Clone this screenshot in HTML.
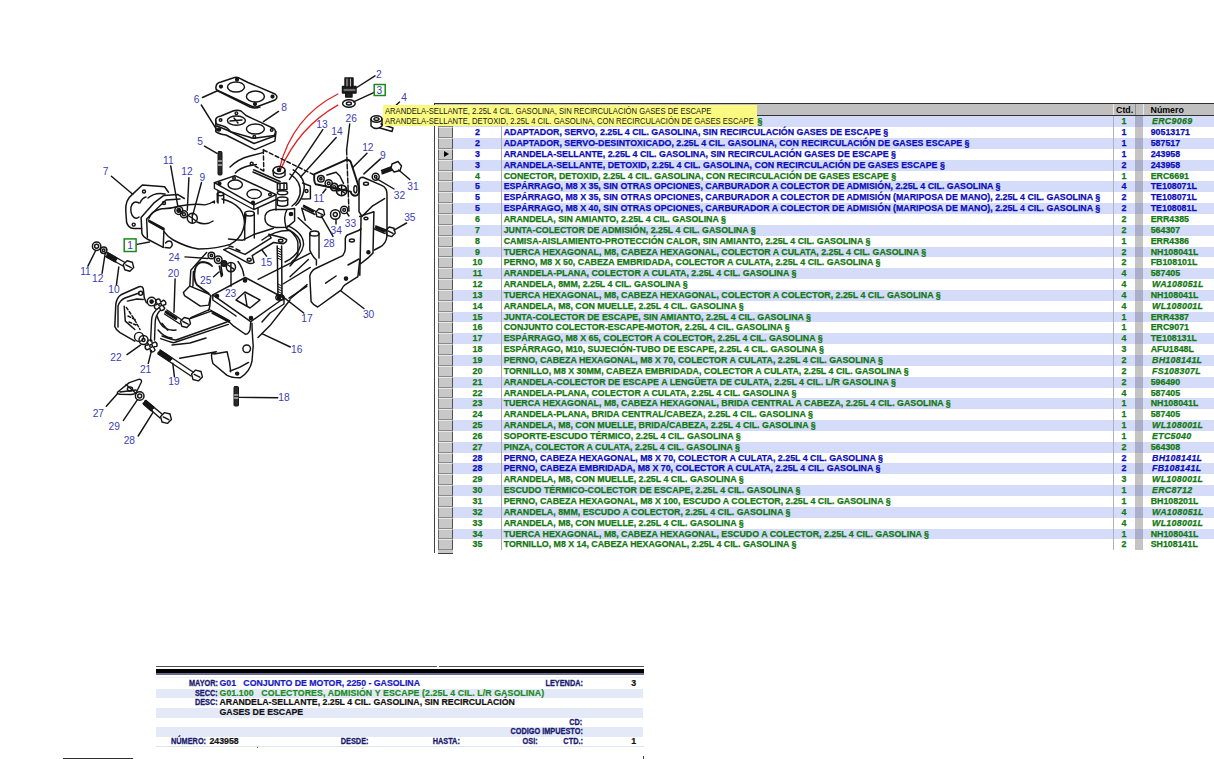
<!DOCTYPE html>
<html><head><meta charset="utf-8"><style>
*{margin:0;padding:0}
html,body{width:1214px;height:759px;overflow:hidden;background:#fff;position:relative;font-family:"Liberation Sans",sans-serif}
.row{position:absolute;left:453px;width:761px;height:10.845px}
.gc{position:absolute;left:1135px;width:8px;height:10.845px}
.sel{position:absolute;left:438px;width:15px;background:#c8c8c8;box-sizing:border-box;border-left:1.3px solid #6a6a6a;border-right:1.3px solid #505050;border-top:1px solid #e8e8e8;border-bottom:1px solid #8a8a8a}
.t{position:absolute;white-space:nowrap;font-weight:bold;font-size:8.83px;-webkit-text-stroke:0.25px currentColor;line-height:10.845px;height:10.845px}
.b{color:#0c0cb8}
.g{color:#127812}
.num{left:453px;width:49px;text-align:center}
.desc{left:503.7px}
.ctd{left:1113px;width:22px;text-align:center}
.part{left:1150.7px}
.it{font-style:italic;letter-spacing:0.3px;left:1152px}
.hd{position:absolute;top:104.8px;line-height:11px;font-size:8.83px;font-weight:bold;color:#000}
.tip{position:absolute;left:383px;top:104.5px;width:374px;height:21.3px;background:#fafa82}
.tipt{position:absolute;left:384.7px;font-size:8.8px;color:#202010;white-space:nowrap;line-height:10px;transform:scaleX(0.869);transform-origin:0 0}
.pl{position:absolute;font-size:8.6px;font-weight:bold;color:#1a1a70;line-height:9.6px;white-space:nowrap;transform:scaleX(0.854);transform-origin:100% 0;-webkit-text-stroke:0.3px currentColor}
.pv{position:absolute;font-size:8.75px;font-weight:bold;line-height:9.6px;white-space:nowrap;-webkit-text-stroke:0.2px currentColor}
</style></head><body>
<svg style="position:absolute;left:0;top:0" width="1214" height="759" viewBox="0 0 1214 759">
<g fill="none" stroke="#151515" stroke-width="1.45" stroke-linecap="round" stroke-linejoin="round">
<!-- leaders -->
<path d="M375,75.8L355.2,88.5 M374.2,92.4L353.6,101.9 M399.5,101.9L396.3,105 M202.5,97.5L218,90.5 M201.3,105L217.1,130.4 M278.5,111.4L263.4,121.7 M204.5,146.2L217,153.3 M322.8,129.6L289.5,179.4 M336.2,137.5L300.6,177 M349.7,124L346.6,150 M367,153.3L352.8,167.6 M380.5,158.9L363.9,173.9 M111.4,176.2L132.7,194.3 M170.7,165.9L177.8,206.2 M188.9,177.7L187.3,210.2 M201.5,182.5L192.8,214.9 M322.8,193L325.9,189 M409.8,179.5L398.7,170 M394,189L376.5,178.7 M406.6,223L394,230.1 M333,236.4L321.2,215.9 M136.9,244.4L149.5,242 M87.9,266.1L95.8,250.3 M102.1,273.2L105.3,252.7 M116.4,285.1L118.8,266.9 M185,256.9L208,258.5 M175.1,279L174,312.3 M213.6,276.7L219,272 M231,286.2L231,271.1 M266.5,256.1L261.8,249.8 M303.7,313L282.4,296.4 M363.9,308.5L341,291 M290.3,347L261.9,333.7 M277.7,397.8L239,397.4 M127,354.6L140.4,345.1 M148.3,363.3L151.5,350.6 M174.4,376.7L172.8,363.3 M106.3,406.3L117.4,393.7 M123.4,420.4L137.5,399.7 M138.2,436L153,412.3"/>
<path d="M346.6,150 L349,212" stroke-dasharray="5,2"/>
<!-- gasket 6 -->
<path d="M216,87 Q216,83 221,82 L233,78 Q237,76 241,79 L248,82.5 L275,94 Q279,97 275,100 L259,106 Q255,108 251,106 L221,92 Q215,90 216,87Z" stroke-width="1.5"/>
<path d="M218,91 L250,107 Q255,109 260,107" />
<ellipse cx="236" cy="87" rx="8.5" ry="5"/><ellipse cx="255.4" cy="96.4" rx="9" ry="5.5"/>
<circle cx="221" cy="86.5" r="1.4" fill="#151515"/><circle cx="237" cy="79.5" r="1.4" fill="#151515"/><circle cx="272.5" cy="96.5" r="1.4" fill="#151515"/><circle cx="255" cy="104" r="1.4" fill="#151515"/>
<!-- spacer 8 -->
<path d="M215.8,119 Q217,116.5 221,116 L233,111 Q237,109.5 241,111 L246,115.5 L273.8,128.5 Q277,131 274,135.5 L256,138 Q253,139 249,137 L230.6,131.6 Q227,127 223,126 L217,124.3 Q215,122 215.8,119Z"/>
<path d="M215.8,120 L215.8,131.6 Q219,134 226,135 L254.9,149.6 L274.9,141.1 L276,131.6 M217,126 L228,130.5 L254,143.5 L274.5,136" stroke-width="1.5"/>
<ellipse cx="236.4" cy="120.6" rx="9" ry="4.7"/><ellipse cx="255.4" cy="129" rx="9" ry="5"/>
<path d="M230,121 L242,120 M234,118 L238,123"/>
<circle cx="220.6" cy="120" r="1.3"/><circle cx="236.4" cy="113.2" r="1.3"/><circle cx="271.7" cy="130" r="1.3"/><circle cx="254.3" cy="136.9" r="1.3"/>
<circle cx="219" cy="129.5" r="1.5" fill="#151515"/>
<!-- stud 5 -->
<rect x="218" y="151.5" width="4" height="23.5" rx="1" fill="#2a2a2a" stroke-width="1"/>
<path d="M218.5,161 L221.5,161 M218.5,165 L221.5,165" stroke="#fff" stroke-width="1"/>
<!-- part 2 plug -->
<path d="M345,78 L353,78 L353,87 L345,87Z M342.5,86.5 L356,86.5 L356,93 L342.5,93Z M345.7,93 L345.7,97 L352,97 L352,93" fill="#222"/>
<path d="M347,79 L347,86 M350.5,79 L350.5,86 M344,90 L355,90" stroke="#fff" stroke-width="0.7"/>
<ellipse cx="348.9" cy="103.5" rx="6.3" ry="3.8" stroke-width="1.5"/><ellipse cx="348.9" cy="103.5" rx="2.5" ry="1.5"/>
<!-- connector 4 -->
<ellipse cx="376.5" cy="119" rx="5.5" ry="3.2"/><ellipse cx="376.5" cy="119" rx="2.5" ry="1.4"/>
<path d="M371,119 L371,126 Q376,131 382,126 L382,119 M381,124 L393,128 L392,131.5 L380,128"/>
<!-- red curves -->
<path d="M337.8,94 Q292,117 279.3,169.1 M337.8,105.1 Q299,127 280.8,169.1" stroke="#e02020" stroke-width="1.3"/>
<!-- plenum housing -->
<path d="M230,167.1 Q238,159 250,156 L263,152.6"/>
<path d="M235.3,173 Q240,168 248,166 L256.4,164.5"/>
<path d="M253.7,169.8 L280,181.6 M253,172 L279,183.5" stroke-width="1.6"/>
<circle cx="251.7" cy="163.8" r="1.5"/>
<path d="M263.3,149.6 L263.8,171 M263.5,150 L314.3,175 M263.8,171 L255,166" stroke-dasharray="4,2.5"/>
<path d="M293.2,169.8 Q306,178 304,190 Q302,200 295.9,205.3 M290,174 Q302,182 300,194 Q298,202 292,206"/>
<path d="M302.5,183 L310.4,186 L310.4,198.7 L302,199" /><circle cx="306.5" cy="191" r="1.5"/>
<!-- boss on housing -->
<ellipse cx="279.1" cy="170.3" rx="6" ry="3.8"/><path d="M273,170.5 L273.5,175.5 Q279,180 285,175.5 L285,170.5"/><circle cx="279" cy="170" r="1.6" fill="#151515"/>
<!-- nut stack 13/14 -->
<path d="M277.4,183.5 L286.7,183 L287,189.5 L277.4,190Z" stroke-width="1.5"/>
<path d="M280,183.5 L280,190 M284,183 L284,189.5"/>
<ellipse cx="282.5" cy="192.8" rx="5.2" ry="2"/>
<ellipse cx="282.5" cy="199" rx="5.2" ry="2"/><path d="M277.3,199 L277.3,205 Q282.5,207.5 287.7,205 L287.7,199"/>
<!-- thermostat cap -->
<path d="M265,219 Q264,211 274,209.5 L287,209.5 L294.6,208.5 L294.6,221 L287,227.3 L276,227.5 Q265,226 265,219Z" stroke-width="1.5"/>
<path d="M287,209.5 Q283,217 286,227.3"/><circle cx="291" cy="214" r="1.6" fill="#151515"/>
<!-- carb base block -->
<path d="M214.4,182.7 L234.9,175.6 L276,194.6 L253.8,204.8 Z" stroke-width="1.5"/>
<path d="M214.4,182.7 L214.4,188.5 L253.8,209.5 L276,199.5 L276,194.6 M253.8,204.8 L253.8,209.5" stroke-width="1.4"/>
<path d="M218,190.5 L218,203 M276,199.5 L276,210 M258,208 L258,214"/>
<ellipse cx="235.2" cy="184.6" rx="7.2" ry="4.6"/><ellipse cx="254.2" cy="194" rx="7.2" ry="4.6"/>
<circle cx="219.5" cy="183.5" r="1.4" fill="#151515"/><circle cx="234" cy="178" r="1.3"/><circle cx="270" cy="194.5" r="1.3"/><circle cx="253" cy="202.5" r="1.4" fill="#151515"/>
<ellipse cx="220.5" cy="194" rx="3.2" ry="1.8"/><path d="M217.3,194 L217.3,202 M223.7,194 L223.7,203"/>
<!-- gasket 7 -->
<path d="M132.1,194.6 L142.4,185 L164.6,186.7 L168.5,192.2 M132.1,194.6 Q125,200 125.8,211.2 L126.6,222.3 Q128,228 133.7,228.6 L141.6,228.6" stroke-width="1.5"/>
<path d="M139,203 Q133,200 131,207 Q130,214 134,217.5 Q137,219 139,217"/><circle cx="144" cy="191.4" r="1.5"/><circle cx="133.7" cy="224.6" r="1.5"/>
<path d="M148,198 Q155,192 165,194 M140,203 Q142,198 146,197"/>
<!-- intake pipe flange -->
<path d="M141.1,217.4 L153.7,203.2 L163.8,195.4 L178,194.6 L184.3,198.5 M141.1,217.4 L141.9,233.2 Q143,237 148.2,239.5 L163.2,247.4" stroke-width="1.5"/>
<path d="M146.6,219 L156.9,208.7 L166,200 L180,199 M146.6,219 L147.4,237.2"/>
<path d="M148.2,219.8 L164,228.5 L163.2,247.4 M148.8,221.5 L164,230"/>
<circle cx="164" cy="203" r="1.5"/>
<path d="M165.6,243 Q168,240 171,241.5 Q174,245 170,248 L165,247.5"/>
<!-- intake pipe body -->
<path d="M149,218.2 Q151,211 161.6,208.7 Q170,209 179.6,206 Q195,203 204.9,204.9 Q210,204 214.4,201 L214.4,203"/>
<path d="M164,231.6 Q168,237 173.3,240 Q186,247 198.6,249.1 Q218,248.5 230.2,244.4 Q240,239 243,230 Q246,222 246,214" stroke-width="1.5"/>
<path d="M222,199 Q234,202 240,209 Q245,216 244.5,226"/>
<path d="M197,222 Q206,226 213,221"/>
<!-- nuts on pipe 11 12 9 -->
<circle cx="178.8" cy="210.4" r="4" stroke-width="1.5"/><circle cx="178.8" cy="210.4" r="1.8" fill="#151515"/>
<circle cx="184" cy="214.3" r="3.5" stroke-width="1.5"/><circle cx="184" cy="214.3" r="1.5"/>
<circle cx="192.3" cy="218.3" r="5" stroke-width="1.5"/><path d="M189,216 L195.5,220.5 M192.3,213.5 L192.3,223"/>
<!-- bracket 26 -->
<path d="M314.4,174.1 L346.2,159.8 Q349.5,159.5 350.8,162.1 L359.1,187.9 Q360,195.3 355,195.8 Q351,195 350.8,191.6 L315.8,184.2 Q313.5,182 314.4,174.1Z" stroke-width="1.9"/>
<path d="M326.9,175 L336.1,172.3 L339.8,176 L343.5,183.3"/>
<ellipse cx="355.4" cy="189.3" rx="1.6" ry="3.6"/>
<circle cx="320.9" cy="178.7" r="3.3" stroke-width="1.5"/><circle cx="320.9" cy="178.7" r="1.2"/>
<circle cx="328.7" cy="183.3" r="3.6" stroke-width="1.5"/><circle cx="328.7" cy="183.3" r="1.4"/>
<circle cx="334.2" cy="187" r="3.6" stroke-width="1.8"/><circle cx="334.2" cy="187" r="1.4"/>
<circle cx="341.6" cy="190.4" r="5.3" stroke-width="1.6"/><path d="M338.5,188 L344.5,193 M341.6,185.5 L341.6,195.3 M337,191 L346,189"/>
<!-- bolt 31 -->
<path d="M382.2,173.7 L391.7,170.2 M381.5,170.5 L391,167" stroke-width="1.5"/>
<path d="M382.5,172 L390,169" stroke-width="2.5"/>
<path d="M392,164 L398,161.5 L401.5,166 L400,170.5 L394,172 L391,168Z" stroke-width="1.4"/>
<!-- washer 32 -->
<circle cx="375.7" cy="176.7" r="3.5" stroke-width="1.5"/><circle cx="375.7" cy="176.7" r="1.3"/>
<!-- heat shield 30 upper -->
<path d="M359,181 Q359,177.5 363,177.3 L382.2,185.6 Q387,188 387,194 L387,236 Q386,244 380,247 L374.3,250 M359,181 L359,211.7 L362,216.4 M372.7,205.8 L384.6,198.6 M362,216.4 L372.7,205.8" stroke-width="1.5"/>
<ellipse cx="366" cy="183.8" rx="2.5" ry="1.5"/>
<!-- bracket vertical -->
<path d="M359.7,216.4 L373.9,211.7 L373,253 L367.7,258.2 L361,263.5 M361,216.4 L361,220 L359.8,275.3" stroke-width="1.5"/>
<ellipse cx="366" cy="218.5" rx="2" ry="1.3"/><circle cx="368.4" cy="252.3" r="1.5" fill="#151515"/>
<!-- heat shield lower -->
<path d="M315,268.7 L342.7,255.6 Q345.3,252 345.3,249 L345.3,238.4 Q346,235 348.6,234.5 L358.5,230.5 L361,229 M311.1,272.7 Q309.8,275 309.8,276 L311.1,301.7 Q313,305 317.7,307 L341.4,289.8 Q343,286 345.3,284.6 L357.9,276.7 L359.8,259.5 M311.1,272.7 Q313,269.5 315,268.7" stroke-width="1.5"/>
<path d="M325.6,283.2 L336.1,276" stroke-width="1.5"/><circle cx="346" cy="278.6" r="1.6" fill="#151515"/>
<ellipse cx="351.9" cy="240.4" rx="2.5" ry="1.5"/>
<path d="M348,265 L359,259"/>
<!-- bolt 28 r, 35 -->
<path d="M303.8,205.3 L316,211.5 M302.5,208.5 L315,214.5" stroke-width="1.4"/>
<path d="M304,206.5 L313,211.5" stroke-width="2.5"/>
<path d="M324.6,214.4 L321.4,217.6 L316.9,216.5 L315.8,212.0 L319.0,208.8 L323.5,209.9Z M317.9,212.3 L322.5,214.6" stroke-width="1.4"/>
<path d="M375.7,225.9 L386,230 M374.5,229 L385,233.5" stroke-width="1.4"/>
<path d="M376,227.5 L384,231" stroke-width="2.5"/>
<path d="M395.3,233.1 L391.8,236.6 L387.0,235.3 L385.7,230.5 L389.2,227.0 L394.0,228.3Z M388.0,230.8 L393.0,233.3" stroke-width="1.4"/>
<!-- nuts 34 33 -->
<circle cx="335.3" cy="214.5" r="4.8" stroke-width="1.5"/><circle cx="335.3" cy="214.5" r="2"/>
<circle cx="344.2" cy="209.9" r="3.6" stroke-width="1.5"/><circle cx="344.2" cy="209.9" r="1.4"/>
<path d="M336,219.5 L336,224 M347,213 L349,216"/>
<!-- pipe stub -->
<ellipse cx="314.4" cy="233.5" rx="4.6" ry="2.6"/>
<path d="M309.8,233.5 L309.8,250 Q312,256 316.4,260 L316.4,265 M319,233.5 L319,258"/>
<!-- manifold 16 & housing -->
<path d="M290,230.5 Q298,238 297.9,243.7 L297.9,254.3 Q294,262 290,266"/>
<path d="M290,276.7 L308.4,259.5 M290,299 L307.1,284.6" />
<path d="M262,240 Q275,230 290,230.5"/>
<!-- flange plate -->
<path d="M212.8,294.9 L245.2,277.5 L284,298 L250.7,321.7 Z" stroke-width="1.5"/>
<path d="M212.8,294.9 L212.8,300 L236,316 M284,298 L284,304 L270,313 L262,322"/>
<path d="M236,300 L245,292 L260,300 L250,308 Z"/><path d="M245,294 L247,306"/>
<circle cx="217" cy="296" r="1.6" fill="#151515"/><circle cx="245" cy="280.5" r="1.6" fill="#151515"/><circle cx="279" cy="298" r="1.6" fill="#151515"/><circle cx="251" cy="318" r="1.6" fill="#151515"/>
<path d="M250.7,321.7 L250,330 Q248,335 245,334 L233,325.6 Q226,318 211.7,311.4"/>
<path d="M258,337.4 L270,325.6 L290,300 M252,323.2 Q252,330 253.2,345.8 L252,361.2 Q250,372 240.2,377.8 Q232,378 227.1,375.4 L212.9,363.5 Q211,357 211.7,354 L216.4,351.7 L179.7,358.2"/>
<path d="M214,354 L227.1,351.7 Q230,362 230.7,371.8 M248.5,362.4 Q240,368 230,371"/>
<circle cx="246.7" cy="348.7" r="3.8"/><circle cx="237.2" cy="373.6" r="1.5" fill="#151515"/>
<!-- manifold body lines -->
<path d="M190.3,318.5 L210.5,311.4"/>
<path d="M160.7,338.6 Q170,342 173.7,342.8 L228.3,324.4 M162,336 Q172,340 176,340 L227,322"/>
<path d="M161.9,323.2 Q166,328 167.8,330.3"/>
<!-- pad 24/25 -->
<path d="M206.6,252.4 L190.8,270.3 L189.8,286.1 L183.4,292.4 L184.5,295.6 L200.3,306.1 L208.7,305.1 L210.8,295.6 M183.4,292.4 L189.8,286.1 L207.7,293.5 L210.8,295.6 M193.4,271.4 L192.9,286.1"/>
<path d="M195,269.2 Q197,262 203,262 Q209,262.5 212,266 M195,269.2 Q193,279 197.1,285.1 L208.7,293.5" stroke-width="1.9"/>
<path d="M210.8,295.6 L209.8,306.1 L208.7,310.4 M190.8,317.7 L209.8,309.3 M210.8,310.4 L229.8,320.9 M212,313 L229,322"/>
<circle cx="211.4" cy="255.5" r="3.3" stroke-width="1.4"/><circle cx="211.4" cy="255.5" r="1.2"/>
<circle cx="218.2" cy="259.8" r="3.8" stroke-width="1.5"/><circle cx="218.2" cy="259.8" r="1.5"/>
<circle cx="224" cy="263.4" r="2.8" fill="#222"/>
<circle cx="230.9" cy="267.1" r="4.6" stroke-width="1.5"/><path d="M228,265 L233.8,269.2 M230.9,262.8 L230.9,271.4"/>
<path d="M219.3,266.1 L221.4,276.6 L222.5,275 L221,266"/>
<!-- stud 17 -->
<path d="M277.2,246 L278,297 M281.6,246 L282,297" stroke-width="1.5"/>
<path d="M277.5,248 L281.6,250 M277.5,250.5 L281.6,252.5 M277.5,253 L281.6,255 M277.5,255.5 L281.6,257.5 M277.5,258 L281.6,260 M277.8,284 L282,286 M277.8,286.5 L282,288.5 M277.8,289 L282,291 M277.8,291.5 L282,293.5 M277.8,294 L282,296" stroke-width="1"/>
<ellipse cx="280" cy="297.5" rx="4.2" ry="2.8" stroke-width="1.4"/>
<!-- gasket 15 -->
<path d="M223.7,249.7 L247.4,262.7 Q251,264.5 254,262.5 L252.2,255.6 L273.5,242.5 L283,243.7 Q287,242 286.6,239.5 L283,237.8 L268.8,234.2 L271.2,237.8 L245,254.4 L228.5,247.9 Z" stroke-width="1.5"/>
<ellipse cx="249.2" cy="259.7" rx="2" ry="1.5"/><ellipse cx="280.7" cy="240.8" rx="2.2" ry="1.5"/>
<path d="M229,246 L233,247 M236,249 L240,251"/>
<!-- behind lines -->
<path d="M228.5,239 Q236,240 242.7,240.2 L254.6,234.2 L273.5,228.3"/>
<path d="M286.3,228.5 Q301,236 300.5,245 Q299,253 289.8,259.3 L285,262 M288,225.8 Q304,233 303.5,245 Q302,254 292,261.5"/>
<path d="M298.1,217.8 L311.2,229.7 M301.7,208.3 L305.2,220.2"/>
<ellipse cx="249.5" cy="213.5" rx="4.8" ry="2.4"/><path d="M244.7,213.5 L244.7,240 M254.3,213.5 L254.3,238"/>
<path d="M258.1,279.3 L310.3,253.2 M283,284 L310.3,267.4 M289,298 L306.8,286.4"/>
<path d="M238,261.5 Q243,268 243.9,275.8"/>
<!-- bolt 20 -->
<path d="M166.9,310 L182,320 M164.5,314 L180,324" stroke-width="1.4"/>
<path d="M166,312 L176,318.5" stroke-width="3"/>
<path d="M190.5,323.8 L186.8,327.5 L181.8,326.2 L180.5,321.2 L184.2,317.5 L189.2,318.8Z M182.9,321.5 L188.1,324.1" stroke-width="1.4"/>
<!-- exhaust left flange -->
<path d="M114.8,326.4 L115.8,304.2 Q117,297 121,294.8 L131.6,290 L139,286.8 Q142,286 143.2,288.4 L144.3,297.9 L146.4,302.7 M114.8,326.4 Q116,330 120,332.7 L134.8,341.1" stroke-width="1.5"/>
<path d="M118,327 L118,306 Q120,300 125,298 L139,293 M124.2,306.3 L125.3,321.1 L134.8,329.5 M127.4,301.1 L136.9,299 L143.2,299.5"/>
<path d="M126.3,307.4 Q134,318 140,329.5 M128,316 L136,320 M129,322 L136,325" stroke-dasharray="3,2"/>
<circle cx="140.6" cy="293.2" r="2"/>
<circle cx="139" cy="336.9" r="4.5" stroke-width="1.4"/><circle cx="143.5" cy="340" r="4.5" stroke-width="1.4"/><circle cx="143.5" cy="340" r="1.5"/>
<!-- clamp 21 -->
<path d="M160.8,302.3 Q162.1,301.2 163.4,300.1 Q166.3,301.2 165.8,304.3 Q164.2,304.9 162.6,305.5 Q163.7,306.8 164.8,308.1 Q163.7,311.0 160.6,310.5 Q160.0,308.9 159.4,307.3 Q158.1,308.4 156.8,309.5 Q153.9,308.4 154.4,305.3 Q156.0,304.7 157.6,304.1 Q156.5,302.8 155.4,301.5 Q156.5,298.6 159.6,299.1 Q160.2,300.7 160.8,302.3 Z" stroke-width="1.4"/>
<path d="M152.2,343.5 Q153.7,342.7 155.2,341.9 Q157.9,343.4 156.8,346.4 Q155.1,346.7 153.5,347.0 Q154.3,348.5 155.1,350.0 Q153.6,352.7 150.6,351.6 Q150.3,349.9 150.0,348.3 Q148.5,349.1 147.0,349.9 Q144.3,348.4 145.4,345.4 Q147.1,345.1 148.7,344.8 Q147.9,343.3 147.1,341.8 Q148.6,339.1 151.6,340.2 Q151.9,341.9 152.2,343.5 Z" stroke-width="1.4"/>
<circle cx="160.1" cy="304.8" r="1.4"/><circle cx="151.1" cy="345.9" r="1.4"/>
<path d="M155.8,310.6 Q152,314 151.6,320 L150.6,341 M159.5,311 Q155.5,316 155.2,322 L154.5,340" stroke-width="1.4"/>
<circle cx="151.6" cy="301.6" r="4.3" stroke-width="1.4"/><circle cx="151.6" cy="301.6" r="1.6" fill="#151515"/>
<path d="M157,316 Q160,325 165,328 Q170,331 176,330 M158,330 Q165,338 172,338"/>
<!-- bolt 19 -->
<path d="M160.2,350 L193,372 M158,354 L191,376" stroke-width="1.4"/>
<path d="M160.5,351.5 L171,358.5 M159,353 L169.5,360" stroke-width="3.2"/>
<path d="M202.4,376.9 L198.4,380.9 L193.0,379.5 L191.6,374.1 L195.6,370.1 L201.0,371.5Z M194.2,374.4 L199.8,377.2" stroke-width="1.4"/>
<path d="M172,345 L190,343 L206,338"/>
<!-- bolt 10 + washers -->
<path d="M107.7,252.7 L125,262.5 M106,256.5 L123,266" stroke-width="1.4"/>
<path d="M108,254 L116,258.5 M107,256.5 L115,261" stroke-width="3"/>
<path d="M133.7,267.4 L129.9,271.2 L124.7,269.8 L123.3,264.6 L127.1,260.8 L132.3,262.2Z M125.8,264.9 L131.2,267.6" stroke-width="1.4"/>
<circle cx="96.6" cy="246.3" r="4.2" stroke-width="1.5"/><circle cx="96.6" cy="246.3" r="2"/>
<circle cx="103.7" cy="250.3" r="3.2" stroke-width="1.5"/><circle cx="103.7" cy="250.3" r="1.3"/>
<!-- stud 18 -->
<rect x="234" y="386.5" width="4.5" height="19.5" rx="1" fill="#2a2a2a" stroke-width="1"/>
<path d="M234.5,395 L238,395 M234.5,398 L238,398" stroke="#fff" stroke-width="1"/>
<!-- clamp 27 -->
<path d="M117.4,392.2 L129.3,382.6 L139.5,379.2 Q142,379.5 141.4,382 L136.5,392 Q135,394.5 131,394.5 L120.4,394.2 Q117,394 117.4,392.2Z M120,392 L136,390 M126,384.5 L135,392.5" stroke-width="1.4"/>
<ellipse cx="130" cy="389" rx="2.6" ry="2.1"/>
<circle cx="139.7" cy="396" r="4.3" stroke-width="1.5"/><circle cx="139.7" cy="396" r="2"/>
<!-- bolt 28 lower -->
<path d="M145.6,400.4 L162,414 M143.5,403.5 L160,418" stroke-width="1.4"/>
<path d="M145.5,401.5 L153,407.5 M144,403.5 L151.5,410" stroke-width="3"/>
<path d="M171.4,419.4 L167.4,423.4 L162.0,422.0 L160.6,416.6 L164.6,412.6 L170.0,414.0Z M163.2,416.9 L168.8,419.7" stroke-width="1.4"/>
</g>
<g fill="#3c3cb4" font-family="Liberation Sans, sans-serif" font-size="10.2" text-anchor="middle" dominant-baseline="central">
<text x="378.9" y="74.2">2</text><text x="379.4" y="90">3</text><text x="404.2" y="97.2">4</text>
<text x="196.5" y="99.5">6</text><text x="284" y="107.5">8</text><text x="200" y="141.5">5</text>
<text x="322" y="124">13</text><text x="337" y="131.2">14</text><text x="351.2" y="118.5">26</text>
<text x="105.7" y="171.4">7</text><text x="168.3" y="160.2">11</text><text x="186.9" y="171">12</text><text x="202.4" y="177.5">9</text>
<text x="367.8" y="147">12</text><text x="382.9" y="155">9</text><text x="318.8" y="198.5">11</text>
<text x="413" y="186.6">31</text><text x="399.5" y="195.3">32</text><text x="409.8" y="217.5">35</text>
<text x="350.4" y="223">33</text><text x="336.2" y="230.1">34</text><text x="329.1" y="243.6">28</text>
<text x="130.1" y="245.2">1</text><text x="85.5" y="271.6">11</text><text x="97.7" y="278.8">12</text><text x="114" y="289">10</text>
<text x="174.1" y="257.2">24</text><text x="173.4" y="273.8">20</text><text x="205.7" y="280.5">25</text><text x="230.6" y="293.2">23</text>
<text x="266.5" y="262.4">15</text><text x="307" y="318">17</text><text x="368.6" y="314">30</text><text x="296.7" y="349.6">16</text>
<text x="115.9" y="357.7">22</text><text x="145.6" y="369.6">21</text><text x="173.9" y="381.5">19</text><text x="284" y="397">18</text>
<text x="98.3" y="413">27</text><text x="114.2" y="426.6">29</text><text x="129.3" y="440.4">28</text>
</g>
<rect x="374.2" y="84.5" width="11" height="11" fill="none" stroke="#1a8a1a" stroke-width="1.5"/>
<rect x="124.2" y="238.9" width="11.9" height="12.6" fill="none" stroke="#1a8a1a" stroke-width="1.5"/>
</svg>

<div style="position:absolute;left:434px;top:103px;width:1px;height:450.20px;background:#404040"></div>
<div style="position:absolute;left:434px;top:103px;width:780px;height:1px;background:#303030"></div>
<div style="position:absolute;left:435px;top:104px;width:779px;height:11px;background:#c0c0c0"></div>
<div style="position:absolute;left:435px;top:115px;width:779px;height:1.4px;background:#303030"></div>
<div class="hd" style="left:1116px">Ctd.</div>
<div class="hd" style="left:1150.5px">Número</div>
<div style="position:absolute;left:1113px;top:104px;width:1px;height:11px;background:#e8e8e8"></div>
<div style="position:absolute;left:1135px;top:104px;width:1px;height:11px;background:#909090"></div>
<div style="position:absolute;left:1143px;top:104px;width:1px;height:11px;background:#e8e8e8"></div>
<div class="row" style="top:116.40px;background:#d4dcfa"></div>
<div class="gc" style="top:116.40px;background:#aaaec8"></div>
<div class="t num g" style="top:116.40px">1</div>
<div class="t desc g" style="top:116.40px;left:757.5px">§</div>
<div class="t ctd g" style="top:116.40px">1</div>
<div class="t part it g" style="top:116.40px">ERC9069</div>
<div class="sel" style="top:116.40px;height:10.85px"></div>
<div class="row" style="top:127.25px;background:#ffffff"></div>
<div class="gc" style="top:127.25px;background:#c4c4c4"></div>
<div class="t num b" style="top:127.25px">2</div>
<div class="t desc b" style="top:127.25px">ADAPTADOR, SERVO, 2.25L 4 CIL. GASOLINA, SIN RECIRCULACIÓN GASES DE ESCAPE §</div>
<div class="t ctd b" style="top:127.25px">1</div>
<div class="t part b" style="top:127.25px">90513171</div>
<div class="sel" style="top:127.25px;height:10.85px"></div>
<div class="row" style="top:138.09px;background:#d4dcfa"></div>
<div class="gc" style="top:138.09px;background:#aaaec8"></div>
<div class="t num b" style="top:138.09px">2</div>
<div class="t desc b" style="top:138.09px">ADAPTADOR, SERVO-DESINTOXICADO, 2.25L 4 CIL. GASOLINA, CON RECIRCULACIÓN DE GASES ESCAPE §</div>
<div class="t ctd b" style="top:138.09px">1</div>
<div class="t part b" style="top:138.09px">587517</div>
<div class="sel" style="top:138.09px;height:10.85px"></div>
<div class="row" style="top:148.94px;background:#ffffff"></div>
<div class="gc" style="top:148.94px;background:#c4c4c4"></div>
<div class="t num b" style="top:148.94px">3</div>
<div class="t desc b" style="top:148.94px">ARANDELA-SELLANTE, 2.25L 4 CIL. GASOLINA, SIN RECIRCULACIÓN GASES DE ESCAPE §</div>
<div class="t ctd b" style="top:148.94px">1</div>
<div class="t part b" style="top:148.94px">243958</div>
<div class="sel" style="top:148.94px;height:10.85px"></div>
<div class="row" style="top:159.78px;background:#d4dcfa"></div>
<div class="gc" style="top:159.78px;background:#aaaec8"></div>
<div class="t num b" style="top:159.78px">3</div>
<div class="t desc b" style="top:159.78px">ARANDELA-SELLANTE, DETOXID, 2.25L 4 CIL. GASOLINA, CON RECIRCULACIÓN DE GASES ESCAPE §</div>
<div class="t ctd b" style="top:159.78px">2</div>
<div class="t part b" style="top:159.78px">243958</div>
<div class="sel" style="top:159.78px;height:10.85px"></div>
<div class="row" style="top:170.62px;background:#ffffff"></div>
<div class="gc" style="top:170.62px;background:#c4c4c4"></div>
<div class="t num g" style="top:170.62px">4</div>
<div class="t desc g" style="top:170.62px">CONECTOR, DETOXID, 2.25L 4 CIL. GASOLINA, CON RECIRCULACIÓN DE GASES ESCAPE §</div>
<div class="t ctd g" style="top:170.62px">1</div>
<div class="t part g" style="top:170.62px">ERC6691</div>
<div class="sel" style="top:170.62px;height:10.85px"></div>
<div class="row" style="top:181.47px;background:#d4dcfa"></div>
<div class="gc" style="top:181.47px;background:#aaaec8"></div>
<div class="t num b" style="top:181.47px">5</div>
<div class="t desc b" style="top:181.47px">ESPÁRRAGO, M8 X 35, SIN OTRAS OPCIONES, CARBURADOR A COLECTOR DE ADMISIÓN, 2.25L 4 CIL. GASOLINA §</div>
<div class="t ctd b" style="top:181.47px">4</div>
<div class="t part b" style="top:181.47px">TE108071L</div>
<div class="sel" style="top:181.47px;height:10.85px"></div>
<div class="row" style="top:192.31px;background:#ffffff"></div>
<div class="gc" style="top:192.31px;background:#c4c4c4"></div>
<div class="t num b" style="top:192.31px">5</div>
<div class="t desc b" style="top:192.31px">ESPÁRRAGO, M8 X 35, SIN OTRAS OPCIONES, CARBURADOR A COLECTOR DE ADMISIÓN (MARIPOSA DE MANO), 2.25L 4 CIL. GASOLINA §</div>
<div class="t ctd b" style="top:192.31px">2</div>
<div class="t part b" style="top:192.31px">TE108071L</div>
<div class="sel" style="top:192.31px;height:10.85px"></div>
<div class="row" style="top:203.16px;background:#d4dcfa"></div>
<div class="gc" style="top:203.16px;background:#aaaec8"></div>
<div class="t num b" style="top:203.16px">5</div>
<div class="t desc b" style="top:203.16px">ESPÁRRAGO, M8 X 40, SIN OTRAS OPCIONES, CARBURADOR A COLECTOR DE ADMISIÓN (MARIPOSA DE MANO), 2.25L 4 CIL. GASOLINA §</div>
<div class="t ctd b" style="top:203.16px">2</div>
<div class="t part b" style="top:203.16px">TE108081L</div>
<div class="sel" style="top:203.16px;height:10.85px"></div>
<div class="row" style="top:214.00px;background:#ffffff"></div>
<div class="gc" style="top:214.00px;background:#c4c4c4"></div>
<div class="t num g" style="top:214.00px">6</div>
<div class="t desc g" style="top:214.00px">ARANDELA, SIN AMIANTO, 2.25L 4 CIL. GASOLINA §</div>
<div class="t ctd g" style="top:214.00px">2</div>
<div class="t part g" style="top:214.00px">ERR4385</div>
<div class="sel" style="top:214.00px;height:10.85px"></div>
<div class="row" style="top:224.85px;background:#d4dcfa"></div>
<div class="gc" style="top:224.85px;background:#aaaec8"></div>
<div class="t num g" style="top:224.85px">7</div>
<div class="t desc g" style="top:224.85px">JUNTA-COLECTOR DE ADMISIÓN, 2.25L 4 CIL. GASOLINA §</div>
<div class="t ctd g" style="top:224.85px">2</div>
<div class="t part g" style="top:224.85px">564307</div>
<div class="sel" style="top:224.85px;height:10.85px"></div>
<div class="row" style="top:235.69px;background:#ffffff"></div>
<div class="gc" style="top:235.69px;background:#c4c4c4"></div>
<div class="t num g" style="top:235.69px">8</div>
<div class="t desc g" style="top:235.69px">CAMISA-AISLAMIENTO-PROTECCIÓN CALOR, SIN AMIANTO, 2.25L 4 CIL. GASOLINA §</div>
<div class="t ctd g" style="top:235.69px">1</div>
<div class="t part g" style="top:235.69px">ERR4386</div>
<div class="sel" style="top:235.69px;height:10.85px"></div>
<div class="row" style="top:246.54px;background:#d4dcfa"></div>
<div class="gc" style="top:246.54px;background:#aaaec8"></div>
<div class="t num g" style="top:246.54px">9</div>
<div class="t desc g" style="top:246.54px">TUERCA HEXAGONAL, M8, CABEZA HEXAGONAL, COLECTOR A CULATA, 2.25L 4 CIL. GASOLINA §</div>
<div class="t ctd g" style="top:246.54px">2</div>
<div class="t part g" style="top:246.54px">NH108041L</div>
<div class="sel" style="top:246.54px;height:10.85px"></div>
<div class="row" style="top:257.38px;background:#ffffff"></div>
<div class="gc" style="top:257.38px;background:#c4c4c4"></div>
<div class="t num g" style="top:257.38px">10</div>
<div class="t desc g" style="top:257.38px">PERNO, M8 X 50, CABEZA EMBRIDADA, COLECTOR A CULATA, 2.25L 4 CIL. GASOLINA §</div>
<div class="t ctd g" style="top:257.38px">2</div>
<div class="t part g" style="top:257.38px">FB108101L</div>
<div class="sel" style="top:257.38px;height:10.85px"></div>
<div class="row" style="top:268.23px;background:#d4dcfa"></div>
<div class="gc" style="top:268.23px;background:#aaaec8"></div>
<div class="t num g" style="top:268.23px">11</div>
<div class="t desc g" style="top:268.23px">ARANDELA-PLANA, COLECTOR A CULATA, 2.25L 4 CIL. GASOLINA §</div>
<div class="t ctd g" style="top:268.23px">4</div>
<div class="t part g" style="top:268.23px">587405</div>
<div class="sel" style="top:268.23px;height:10.85px"></div>
<div class="row" style="top:279.08px;background:#ffffff"></div>
<div class="gc" style="top:279.08px;background:#c4c4c4"></div>
<div class="t num g" style="top:279.08px">12</div>
<div class="t desc g" style="top:279.08px">ARANDELA, 8MM, 2.25L 4 CIL. GASOLINA §</div>
<div class="t ctd g" style="top:279.08px">4</div>
<div class="t part it g" style="top:279.08px">WA108051L</div>
<div class="sel" style="top:279.08px;height:10.85px"></div>
<div class="row" style="top:289.92px;background:#d4dcfa"></div>
<div class="gc" style="top:289.92px;background:#aaaec8"></div>
<div class="t num g" style="top:289.92px">13</div>
<div class="t desc g" style="top:289.92px">TUERCA HEXAGONAL, M8, CABEZA HEXAGONAL, COLECTOR A COLECTOR, 2.25L 4 CIL. GASOLINA §</div>
<div class="t ctd g" style="top:289.92px">4</div>
<div class="t part g" style="top:289.92px">NH108041L</div>
<div class="sel" style="top:289.92px;height:10.85px"></div>
<div class="row" style="top:300.76px;background:#ffffff"></div>
<div class="gc" style="top:300.76px;background:#c4c4c4"></div>
<div class="t num g" style="top:300.76px">14</div>
<div class="t desc g" style="top:300.76px">ARANDELA, M8, CON MUELLE, 2.25L 4 CIL. GASOLINA §</div>
<div class="t ctd g" style="top:300.76px">4</div>
<div class="t part it g" style="top:300.76px">WL108001L</div>
<div class="sel" style="top:300.76px;height:10.85px"></div>
<div class="row" style="top:311.61px;background:#d4dcfa"></div>
<div class="gc" style="top:311.61px;background:#aaaec8"></div>
<div class="t num g" style="top:311.61px">15</div>
<div class="t desc g" style="top:311.61px">JUNTA-COLECTOR DE ESCAPE, SIN AMIANTO, 2.25L 4 CIL. GASOLINA §</div>
<div class="t ctd g" style="top:311.61px">1</div>
<div class="t part g" style="top:311.61px">ERR4387</div>
<div class="sel" style="top:311.61px;height:10.85px"></div>
<div class="row" style="top:322.46px;background:#ffffff"></div>
<div class="gc" style="top:322.46px;background:#c4c4c4"></div>
<div class="t num g" style="top:322.46px">16</div>
<div class="t desc g" style="top:322.46px">CONJUNTO COLECTOR-ESCAPE-MOTOR, 2.25L 4 CIL. GASOLINA §</div>
<div class="t ctd g" style="top:322.46px">1</div>
<div class="t part g" style="top:322.46px">ERC9071</div>
<div class="sel" style="top:322.46px;height:10.85px"></div>
<div class="row" style="top:333.30px;background:#d4dcfa"></div>
<div class="gc" style="top:333.30px;background:#aaaec8"></div>
<div class="t num g" style="top:333.30px">17</div>
<div class="t desc g" style="top:333.30px">ESPÁRRAGO, M8 X 65, COLECTOR A COLECTOR, 2.25L 4 CIL. GASOLINA §</div>
<div class="t ctd g" style="top:333.30px">4</div>
<div class="t part g" style="top:333.30px">TE108131L</div>
<div class="sel" style="top:333.30px;height:10.85px"></div>
<div class="row" style="top:344.14px;background:#ffffff"></div>
<div class="gc" style="top:344.14px;background:#c4c4c4"></div>
<div class="t num g" style="top:344.14px">18</div>
<div class="t desc g" style="top:344.14px">ESPÁRRAGO, M10, SUJECIÓN-TUBO DE ESCAPE, 2.25L 4 CIL. GASOLINA §</div>
<div class="t ctd g" style="top:344.14px">3</div>
<div class="t part g" style="top:344.14px">AFU1848L</div>
<div class="sel" style="top:344.14px;height:10.85px"></div>
<div class="row" style="top:354.99px;background:#d4dcfa"></div>
<div class="gc" style="top:354.99px;background:#aaaec8"></div>
<div class="t num g" style="top:354.99px">19</div>
<div class="t desc g" style="top:354.99px">PERNO, CABEZA HEXAGONAL, M8 X 70, COLECTOR A CULATA, 2.25L 4 CIL. GASOLINA §</div>
<div class="t ctd g" style="top:354.99px">2</div>
<div class="t part it g" style="top:354.99px">BH108141L</div>
<div class="sel" style="top:354.99px;height:10.85px"></div>
<div class="row" style="top:365.84px;background:#ffffff"></div>
<div class="gc" style="top:365.84px;background:#c4c4c4"></div>
<div class="t num g" style="top:365.84px">20</div>
<div class="t desc g" style="top:365.84px">TORNILLO, M8 X 30MM, CABEZA EMBRIDADA, COLECTOR A CULATA, 2.25L 4 CIL. GASOLINA §</div>
<div class="t ctd g" style="top:365.84px">2</div>
<div class="t part it g" style="top:365.84px">FS108307L</div>
<div class="sel" style="top:365.84px;height:10.85px"></div>
<div class="row" style="top:376.68px;background:#d4dcfa"></div>
<div class="gc" style="top:376.68px;background:#aaaec8"></div>
<div class="t num g" style="top:376.68px">21</div>
<div class="t desc g" style="top:376.68px">ARANDELA-COLECTOR DE ESCAPE A LENGÜETA DE CULATA, 2.25L 4 CIL. L/R GASOLINA §</div>
<div class="t ctd g" style="top:376.68px">2</div>
<div class="t part g" style="top:376.68px">596490</div>
<div class="sel" style="top:376.68px;height:10.85px"></div>
<div class="row" style="top:387.52px;background:#ffffff"></div>
<div class="gc" style="top:387.52px;background:#c4c4c4"></div>
<div class="t num g" style="top:387.52px">22</div>
<div class="t desc g" style="top:387.52px">ARANDELA-PLANA, COLECTOR A CULATA, 2.25L 4 CIL. GASOLINA §</div>
<div class="t ctd g" style="top:387.52px">4</div>
<div class="t part g" style="top:387.52px">587405</div>
<div class="sel" style="top:387.52px;height:10.85px"></div>
<div class="row" style="top:398.37px;background:#d4dcfa"></div>
<div class="gc" style="top:398.37px;background:#aaaec8"></div>
<div class="t num g" style="top:398.37px">23</div>
<div class="t desc g" style="top:398.37px">TUERCA HEXAGONAL, M8, CABEZA HEXAGONAL, BRIDA CENTRAL A CABEZA, 2.25L 4 CIL. GASOLINA §</div>
<div class="t ctd g" style="top:398.37px">1</div>
<div class="t part g" style="top:398.37px">NH108041L</div>
<div class="sel" style="top:398.37px;height:10.85px"></div>
<div class="row" style="top:409.22px;background:#ffffff"></div>
<div class="gc" style="top:409.22px;background:#c4c4c4"></div>
<div class="t num g" style="top:409.22px">24</div>
<div class="t desc g" style="top:409.22px">ARANDELA-PLANA, BRIDA CENTRAL/CABEZA, 2.25L 4 CIL. GASOLINA §</div>
<div class="t ctd g" style="top:409.22px">1</div>
<div class="t part g" style="top:409.22px">587405</div>
<div class="sel" style="top:409.22px;height:10.85px"></div>
<div class="row" style="top:420.06px;background:#d4dcfa"></div>
<div class="gc" style="top:420.06px;background:#aaaec8"></div>
<div class="t num g" style="top:420.06px">25</div>
<div class="t desc g" style="top:420.06px">ARANDELA, M8, CON MUELLE, BRIDA/CABEZA, 2.25L 4 CIL. GASOLINA §</div>
<div class="t ctd g" style="top:420.06px">1</div>
<div class="t part it g" style="top:420.06px">WL108001L</div>
<div class="sel" style="top:420.06px;height:10.85px"></div>
<div class="row" style="top:430.90px;background:#ffffff"></div>
<div class="gc" style="top:430.90px;background:#c4c4c4"></div>
<div class="t num g" style="top:430.90px">26</div>
<div class="t desc g" style="top:430.90px">SOPORTE-ESCUDO TÉRMICO, 2.25L 4 CIL. GASOLINA §</div>
<div class="t ctd g" style="top:430.90px">1</div>
<div class="t part it g" style="top:430.90px">ETC5040</div>
<div class="sel" style="top:430.90px;height:10.85px"></div>
<div class="row" style="top:441.75px;background:#d4dcfa"></div>
<div class="gc" style="top:441.75px;background:#aaaec8"></div>
<div class="t num g" style="top:441.75px">27</div>
<div class="t desc g" style="top:441.75px">PINZA, COLECTOR A CULATA, 2.25L 4 CIL. GASOLINA §</div>
<div class="t ctd g" style="top:441.75px">2</div>
<div class="t part g" style="top:441.75px">564308</div>
<div class="sel" style="top:441.75px;height:10.85px"></div>
<div class="row" style="top:452.60px;background:#ffffff"></div>
<div class="gc" style="top:452.60px;background:#c4c4c4"></div>
<div class="t num b" style="top:452.60px">28</div>
<div class="t desc b" style="top:452.60px">PERNO, CABEZA HEXAGONAL, M8 X 70, COLECTOR A CULATA, 2.25L 4 CIL. GASOLINA §</div>
<div class="t ctd b" style="top:452.60px">2</div>
<div class="t part it b" style="top:452.60px">BH108141L</div>
<div class="sel" style="top:452.60px;height:10.85px"></div>
<div class="row" style="top:463.44px;background:#d4dcfa"></div>
<div class="gc" style="top:463.44px;background:#aaaec8"></div>
<div class="t num b" style="top:463.44px">28</div>
<div class="t desc b" style="top:463.44px">PERNO, CABEZA EMBRIDADA, M8 X 70, COLECTOR A CULATA, 2.25L 4 CIL. GASOLINA §</div>
<div class="t ctd b" style="top:463.44px">2</div>
<div class="t part it b" style="top:463.44px">FB108141L</div>
<div class="sel" style="top:463.44px;height:10.85px"></div>
<div class="row" style="top:474.29px;background:#ffffff"></div>
<div class="gc" style="top:474.29px;background:#c4c4c4"></div>
<div class="t num g" style="top:474.29px">29</div>
<div class="t desc g" style="top:474.29px">ARANDELA, M8, CON MUELLE, 2.25L 4 CIL. GASOLINA §</div>
<div class="t ctd g" style="top:474.29px">3</div>
<div class="t part it g" style="top:474.29px">WL108001L</div>
<div class="sel" style="top:474.29px;height:10.85px"></div>
<div class="row" style="top:485.13px;background:#d4dcfa"></div>
<div class="gc" style="top:485.13px;background:#aaaec8"></div>
<div class="t num g" style="top:485.13px">30</div>
<div class="t desc g" style="top:485.13px">ESCUDO TÉRMICO-COLECTOR DE ESCAPE, 2.25L 4 CIL. GASOLINA §</div>
<div class="t ctd g" style="top:485.13px">1</div>
<div class="t part it g" style="top:485.13px">ERC8712</div>
<div class="sel" style="top:485.13px;height:10.85px"></div>
<div class="row" style="top:495.98px;background:#ffffff"></div>
<div class="gc" style="top:495.98px;background:#c4c4c4"></div>
<div class="t num g" style="top:495.98px">31</div>
<div class="t desc g" style="top:495.98px">PERNO, CABEZA HEXAGONAL, M8 X 100, ESCUDO A COLECTOR, 2.25L 4 CIL. GASOLINA §</div>
<div class="t ctd g" style="top:495.98px">1</div>
<div class="t part g" style="top:495.98px">BH108201L</div>
<div class="sel" style="top:495.98px;height:10.85px"></div>
<div class="row" style="top:506.82px;background:#d4dcfa"></div>
<div class="gc" style="top:506.82px;background:#aaaec8"></div>
<div class="t num g" style="top:506.82px">32</div>
<div class="t desc g" style="top:506.82px">ARANDELA, 8MM, ESCUDO A COLECTOR, 2.25L 4 CIL. GASOLINA §</div>
<div class="t ctd g" style="top:506.82px">4</div>
<div class="t part it g" style="top:506.82px">WA108051L</div>
<div class="sel" style="top:506.82px;height:10.85px"></div>
<div class="row" style="top:517.67px;background:#ffffff"></div>
<div class="gc" style="top:517.67px;background:#c4c4c4"></div>
<div class="t num g" style="top:517.67px">33</div>
<div class="t desc g" style="top:517.67px">ARANDELA, M8, CON MUELLE, 2.25L 4 CIL. GASOLINA §</div>
<div class="t ctd g" style="top:517.67px">4</div>
<div class="t part it g" style="top:517.67px">WL108001L</div>
<div class="sel" style="top:517.67px;height:10.85px"></div>
<div class="row" style="top:528.51px;background:#d4dcfa"></div>
<div class="gc" style="top:528.51px;background:#aaaec8"></div>
<div class="t num g" style="top:528.51px">34</div>
<div class="t desc g" style="top:528.51px">TUERCA HEXAGONAL, M8, CABEZA HEXAGONAL, ESCUDO A COLECTOR, 2.25L 4 CIL. GASOLINA §</div>
<div class="t ctd g" style="top:528.51px">1</div>
<div class="t part g" style="top:528.51px">NH108041L</div>
<div class="sel" style="top:528.51px;height:10.85px"></div>
<div class="row" style="top:539.36px;background:#ffffff"></div>
<div class="gc" style="top:539.36px;background:#c4c4c4"></div>
<div class="t num g" style="top:539.36px">35</div>
<div class="t desc g" style="top:539.36px">TORNILLO, M8 X 14, CABEZA HEXAGONAL, 2.25L 4 CIL. GASOLINA §</div>
<div class="t ctd g" style="top:539.36px">2</div>
<div class="t part g" style="top:539.36px">SH108141L</div>
<div class="sel" style="top:539.36px;height:10.85px"></div>
<div style="position:absolute;left:501px;top:116px;width:1px;height:434.20px;background:#a8a8b8"></div>
<div style="position:absolute;left:1113px;top:116px;width:1.3px;height:434.20px;background:#b0b0c2"></div>
<div style="position:absolute;left:443.6px;top:150.53px;width:0;height:0;border-top:3.9px solid transparent;border-bottom:3.9px solid transparent;border-left:5.8px solid #000"></div>
<div style="position:absolute;left:438px;top:550.20px;width:15px;height:3px;background:#c8c8c8;border-bottom:1px solid #404040"></div>
<div class="tip"></div>
<div class="tipt" style="top:106px">ARANDELA-SELLANTE, 2.25L 4 CIL. GASOLINA, SIN RECIRCULACIÓN GASES DE ESCAPE</div>
<div class="tipt" style="top:115.6px">ARANDELA-SELLANTE, DETOXID, 2.25L 4 CIL. GASOLINA, CON RECIRCULACIÓN DE GASES ESCAPE</div>
<div style="position:absolute;left:156px;top:666px;width:488px;height:1.2px;background:#505050"></div>
<div style="position:absolute;left:437px;top:665.5px;width:1.5px;height:2px;background:#fff"></div>
<div style="position:absolute;left:156px;top:669px;width:488px;height:3.8px;background:#000"></div>
<div style="position:absolute;left:156px;top:672.8px;width:488px;height:2px;background:#6c6c90"></div>
<div style="position:absolute;left:156px;top:677.2px;width:488px;height:1px;background:#eef0fa"></div>
<div style="position:absolute;left:156px;top:688.80px;width:486.5px;height:9.60px;background:#e4e9f8"></div>
<div style="position:absolute;left:156px;top:708.00px;width:486.5px;height:9.60px;background:#e4e9f8"></div>
<div style="position:absolute;left:156px;top:727.20px;width:486.5px;height:9.60px;background:#e4e9f8"></div>
<div style="position:absolute;left:156px;top:746px;width:488px;height:1.2px;background:#e0e4f0"></div>
<div class="pl" style="right:996px;top:679.20px">MAYOR:</div>
<div class="pl" style="right:996px;top:688.80px">SECC:</div>
<div class="pl" style="right:996px;top:698.40px">DESC:</div>
<div class="pl" style="right:1008px;top:736.80px">NÚMERO:</div>
<div class="pl" style="right:631.5px;top:679.20px">LEYENDA:</div>
<div class="pl" style="right:631.5px;top:717.60px">CD:</div>
<div class="pl" style="right:631.5px;top:727.20px">CODIGO IMPUESTO:</div>
<div class="pl" style="right:631.5px;top:736.80px">CTD.:</div>
<div class="pl" style="right:676.5px;top:736.80px">OSI:</div>
<div class="pl" style="right:754px;top:736.80px">HASTA:</div>
<div class="pl" style="right:846px;top:736.80px">DESDE:</div>
<div class="pv" style="left:219.5px;top:679.20px;color:#1818c0">G01&nbsp;&nbsp; CONJUNTO DE MOTOR, 2250 - GASOLINA</div>
<div class="pv" style="left:219.5px;top:688.80px;color:#1a8a22"><span style="letter-spacing:0.1px">G01.100&nbsp;&nbsp; COLECTORES, ADMISIÓN Y ESCAPE (2.25L 4 CIL. L/R GASOLINA)</span></div>
<div class="pv" style="left:219.5px;top:698.40px;color:#101010">ARANDELA-SELLANTE, 2.25L 4 CIL. GASOLINA, SIN RECIRCULACIÓN</div>
<div class="pv" style="left:219.5px;top:708.00px;color:#101010">GASES DE ESCAPE</div>
<div class="pv" style="left:209.5px;top:736.80px;color:#101010">243958</div>
<div class="pv" style="right:578px;top:679.20px;color:#101010">3</div>
<div class="pv" style="right:578px;top:736.80px;color:#101010">1</div>
<div style="position:absolute;left:63px;top:757.5px;width:70px;height:1.5px;background:#303030"></div>
<div style="position:absolute;left:642.5px;top:756px;width:1.2px;height:3px;background:#404040"></div>
<div style="position:absolute;left:256.5px;top:746.5px;width:1.5px;height:1.5px;background:#606060"></div>
</body></html>
